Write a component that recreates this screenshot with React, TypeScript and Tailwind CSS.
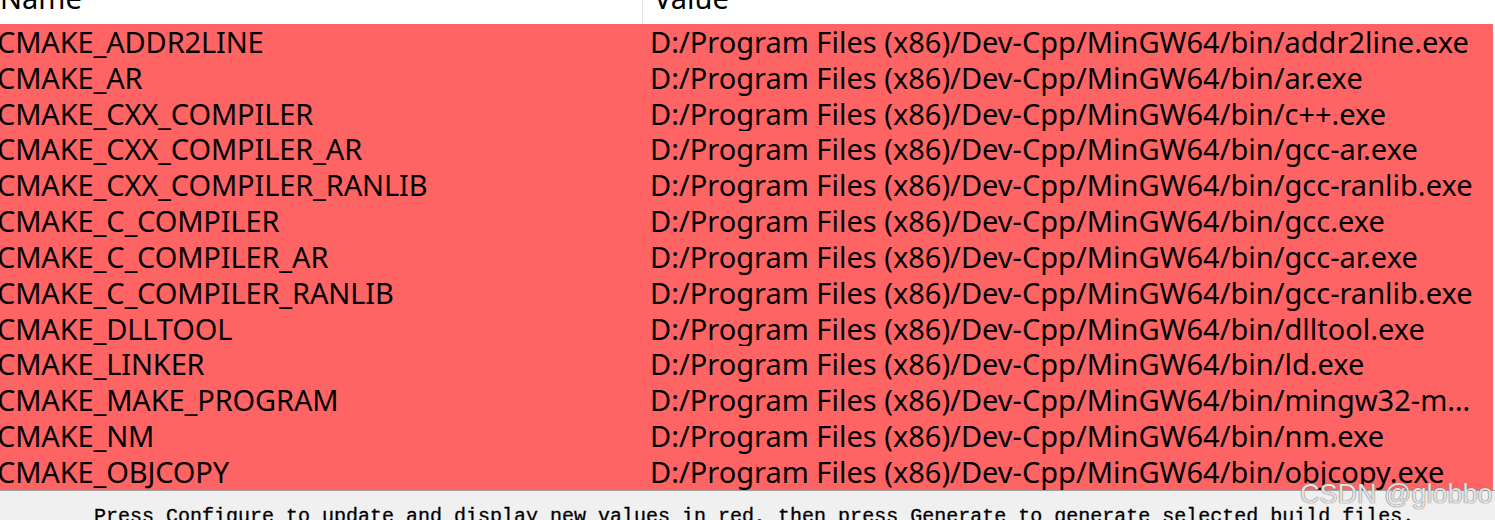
import React from 'react';

const BIN = 'D:/Program Files (x86)/Dev-Cpp/MinGW64/bin/';

const entries: [string, string][] = [
  ['CMAKE_ADDR2LINE', 'addr2line.exe'],
  ['CMAKE_AR', 'ar.exe'],
  ['CMAKE_CXX_COMPILER', 'c++.exe'],
  ['CMAKE_CXX_COMPILER_AR', 'gcc-ar.exe'],
  ['CMAKE_CXX_COMPILER_RANLIB', 'gcc-ranlib.exe'],
  ['CMAKE_C_COMPILER', 'gcc.exe'],
  ['CMAKE_C_COMPILER_AR', 'gcc-ar.exe'],
  ['CMAKE_C_COMPILER_RANLIB', 'gcc-ranlib.exe'],
  ['CMAKE_DLLTOOL', 'dlltool.exe'],
  ['CMAKE_LINKER', 'ld.exe'],
  ['CMAKE_MAKE_PROGRAM', 'mingw32-make.exe'],
  ['CMAKE_NM', 'nm.exe'],
  ['CMAKE_OBJCOPY', 'objcopy.exe'],
];

function CacheRow({ name, value }: { name: string; value: string }) {
  return (
    <div className="flex h-[35.83px] shrink-0 bg-[#ff6464] leading-[35.83px] text-black">
      <div className="w-[643px] shrink-0 overflow-hidden whitespace-nowrap">
        <div className="-ml-[3px] tracking-[-0.15px]">{name}</div>
      </div>
      <div className="min-w-0 flex-1 truncate pl-[7px] pr-[12px]">{value}</div>
    </div>
  );
}

export default function App() {
  return (
    <div className="relative flex h-[520px] w-[1495px] flex-col overflow-hidden bg-[#f0f0f0] font-['Noto_Sans',sans-serif]">
      {/* cache table */}
      <div className="flex h-[490px] shrink-0 flex-col overflow-hidden bg-white pr-[2px] text-[29px]">
        <div className="flex h-[24px] shrink-0 overflow-hidden bg-white text-black">
          <div className="w-[643px] shrink-0 border-r border-[#e3e3e3]">
            <div className="-mt-[20px] leading-[36px]">Name</div>
          </div>
          <div className="flex-1 pl-[11px]">
            <div className="-mt-[20px] leading-[36px]">Value</div>
          </div>
        </div>
        <div className="flex flex-1 flex-col overflow-hidden">
          {entries.map(([name, file]) => (
            <CacheRow key={name} name={name} value={BIN + file} />
          ))}
        </div>
      </div>

      {/* status hint */}
      <div className="flex-1 border-t border-[#a0a0a0] pl-[94px] pt-[16px]">
        <p className="whitespace-nowrap font-['Liberation_Mono',monospace] text-[20px] leading-none text-black [-webkit-text-stroke:0.3px_#000]">
          Press Configure to update and display new values in red, then press Generate to generate selected build files.
        </p>
      </div>

      {/* watermark */}
      <div className="pointer-events-none absolute left-[1300px] top-[481px] font-['Liberation_Sans',sans-serif] text-[27px] leading-none text-white/80 [text-shadow:0_0_1px_#6b6b6b,0_0_1px_#6b6b6b]">
        CSDN @globbo
      </div>
    </div>
  );
}
